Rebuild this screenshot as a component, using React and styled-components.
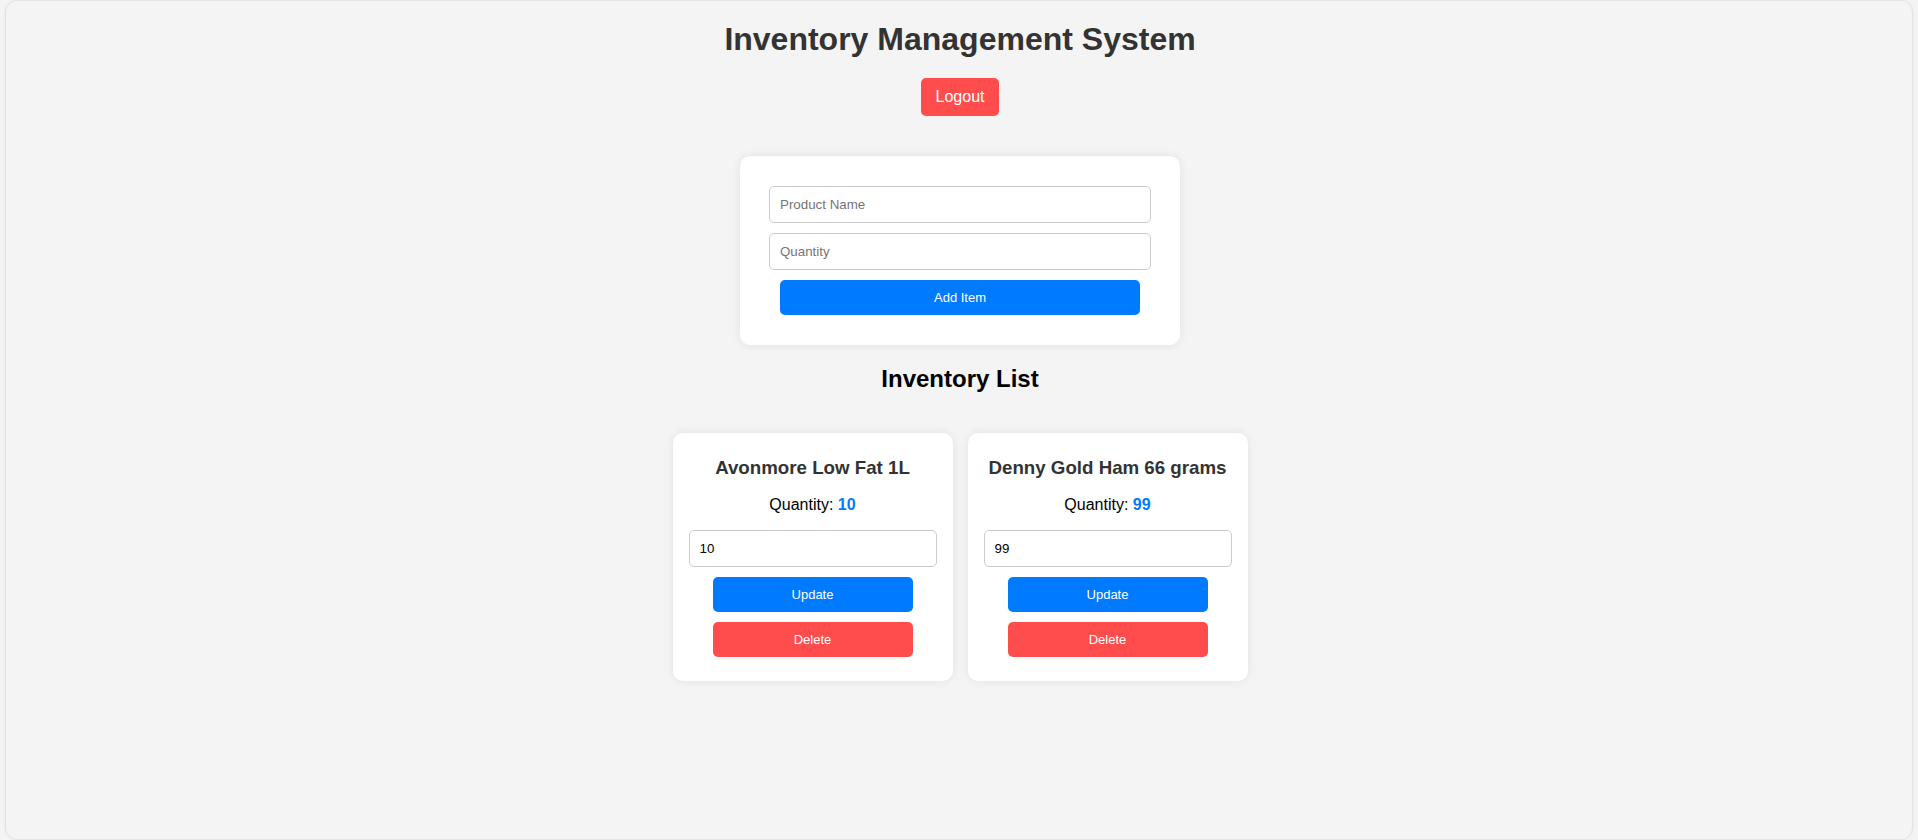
import React from "react";
import styled, { createGlobalStyle } from "styled-components";

const GlobalStyle = createGlobalStyle`
  html, body {
    margin: 0;
    padding: 0;
    background: #f4f4f4;
    font-family: "Liberation Sans", Arial, sans-serif;
  }
  * {
    box-sizing: border-box;
  }
`;

const Page = styled.div`
  height: 840px;
  margin: 0 5px;
  border: 1px solid #e3e3e3;
  border-radius: 12px;
  background: #f4f4f4;
  box-shadow: 0 0 4px rgba(0, 0, 0, 0.04);
  display: flex;
  flex-direction: column;
  align-items: center;
  padding-left: 2px;
`;

const Title = styled.h1`
  font-size: 32px;
  font-weight: bold;
  color: #333;
  margin: 20px 0 20px;
`;

const Button = styled.button`
  border: none;
  border-radius: 5px;
  color: #fff;
  cursor: pointer;
  font-family: "Liberation Sans", Arial, sans-serif;
  font-size: 13px;
  padding: 10px;
  width: ${(p) => p.$width || "200px"};
  background: ${(p) => (p.$danger ? "#ff4d4d" : "#007bff")};
`;

const LogoutButton = styled(Button)`
  font-size: 16px;
  padding: 10px 15px;
  width: auto;
  margin-bottom: 40px;
`;

const FormCard = styled.div`
  width: 440px;
  background: #fff;
  border-radius: 10px;
  box-shadow: 0 0 10px rgba(0, 0, 0, 0.08);
  padding: 30px 29px;
  display: flex;
  flex-direction: column;
  align-items: center;
  gap: 10px;
`;

const Input = styled.input`
  width: 100%;
  padding: 10px;
  border: 1px solid #ccc;
  border-radius: 5px;
  font-family: "Liberation Sans", Arial, sans-serif;
  font-size: 13.333px;
  color: #000;
  background: #fff;
  outline: none;
  &::placeholder {
    color: #757575;
  }
`;

const SubTitle = styled.h2`
  font-size: 24px;
  font-weight: bold;
  color: #000;
  margin: 20px 0 40px;
`;

const CardRow = styled.div`
  display: flex;
  justify-content: center;
  gap: 15px;
`;

const ItemCard = styled.div`
  width: 280px;
  background: #fff;
  border-radius: 10px;
  box-shadow: 0 0 10px rgba(0, 0, 0, 0.08);
  padding: 24px 16px;
  display: flex;
  flex-direction: column;
  align-items: center;
  text-align: center;
`;

const ItemName = styled.h3`
  font-size: 18.72px;
  font-weight: bold;
  color: #333;
  margin: 0 0 17px;
`;

const QuantityText = styled.p`
  font-size: 16px;
  color: #000;
  margin: 0 0 16px;
`;

const QuantityValue = styled.span`
  color: #007bff;
  font-weight: bold;
`;

const Actions = styled.div`
  display: flex;
  flex-direction: column;
  align-items: center;
  gap: 10px;
  margin-top: 10px;
`;

const items = [
  { id: 1, name: "Avonmore Low Fat 1L", quantity: 10 },
  { id: 2, name: "Denny Gold Ham 66 grams", quantity: 99 },
];

export default function App() {
  return (
    <>
      <GlobalStyle />
      <Page>
        <Title>Inventory Management System</Title>
        <LogoutButton $danger>Logout</LogoutButton>

        <FormCard>
          <Input placeholder="Product Name" />
          <Input placeholder="Quantity" />
          <Button $width="360px">Add Item</Button>
        </FormCard>

        <SubTitle>Inventory List</SubTitle>

        <CardRow>
          {items.map((item) => (
            <ItemCard key={item.id}>
              <ItemName>{item.name}</ItemName>
              <QuantityText>
                Quantity: <QuantityValue>{item.quantity}</QuantityValue>
              </QuantityText>
              <Input defaultValue={item.quantity} />
              <Actions>
                <Button>Update</Button>
                <Button $danger>Delete</Button>
              </Actions>
            </ItemCard>
          ))}
        </CardRow>
      </Page>
    </>
  );
}
